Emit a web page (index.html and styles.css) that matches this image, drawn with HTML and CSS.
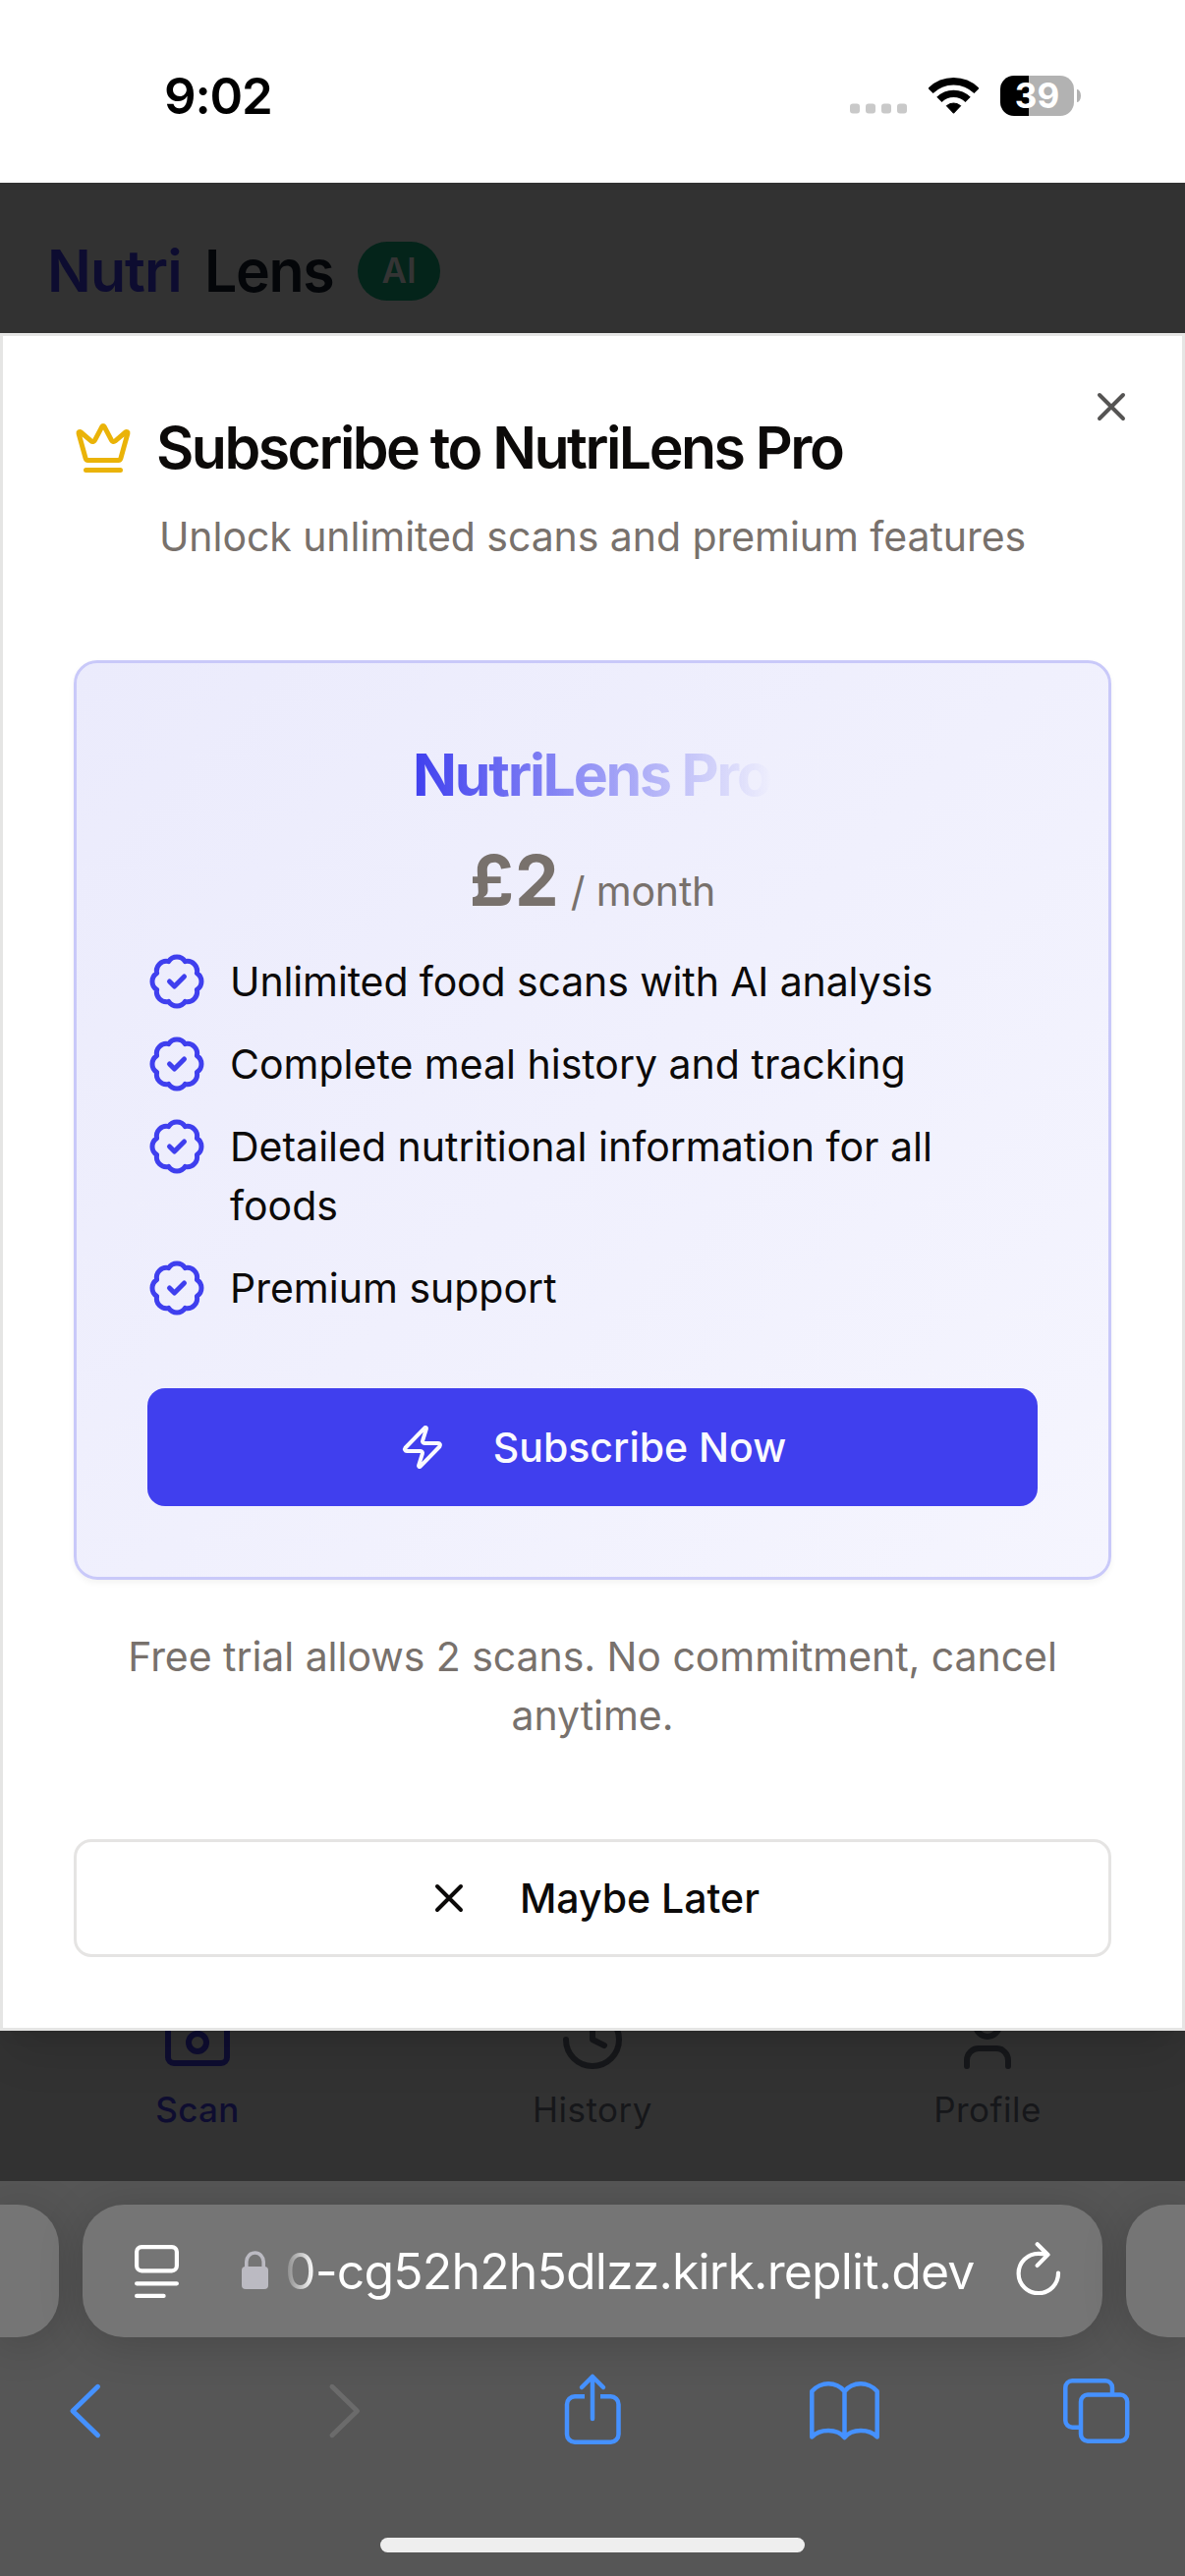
FILE: index.html
```html
<!DOCTYPE html>
<html lang="en">
<head>
<meta charset="utf-8">
<title>NutriLens</title>
<link rel="stylesheet" href="styles.css">
</head>
<body>
<svg class="sprite" aria-hidden="true">
  <symbol id="badge-check" viewBox="0 0 24 24"><path d="M3.85 8.62a4 4 0 0 1 4.78-4.77 4 4 0 0 1 6.74 0 4 4 0 0 1 4.78 4.78 4 4 0 0 1 0 6.74 4 4 0 0 1-4.77 4.78 4 4 0 0 1-6.75 0 4 4 0 0 1-4.78-4.77 4 4 0 0 1 0-6.76Z"/><path d="m9 12 2 2 4-4"/></symbol>
  <symbol id="close" viewBox="0 0 24 24"><path d="M18 6 6 18M6 6l12 12"/></symbol>
</svg>

<div class="screen">
  <div class="status">
    <span class="time">9:02</span>
    <div class="indicators">
      <svg width="58" height="41" viewBox="0 0 58 41" fill="#c9c9c9"><rect y="28.5" width="10" height="10" rx="3"/><rect x="16" y="28.5" width="10" height="10" rx="3"/><rect x="32" y="28.5" width="10" height="10" rx="3"/><rect x="48" y="28.5" width="10" height="10" rx="3"/></svg>
      <svg width="51" height="37" viewBox="0 0 51 37" fill="none" stroke="#000"><path stroke-width="7.4" d="M2 13.5a33.25 33.25 0 0 1 47 0M10.9 22.4a20.6 20.6 0 0 1 29.2 0"/><path fill="#000" stroke-width="1" stroke-linejoin="round" d="M25.5 36.3l-7.2-7.6a11 11 0 0 1 14.4 0z"/></svg>
      <div class="power"><span class="battery">39</span><i class="nub"></i></div>
    </div>
  </div>

  <div class="app">
    <header class="brand">
      <span class="nutri">Nutri</span><span class="lens">Lens</span><span class="ai">AI</span>
    </header>
    <nav class="tabs">
      <div class="tab active">
        <svg class="icon" viewBox="0 0 24 24"><path d="M14.5 4h-5L7 7H4a2 2 0 0 0-2 2v9a2 2 0 0 0 2 2h16a2 2 0 0 0 2-2V9a2 2 0 0 0-2-2h-3z"/><circle cx="12" cy="13" r="3"/></svg>
        <span>Scan</span>
      </div>
      <div class="tab">
        <svg class="icon" viewBox="0 0 24 24"><path d="M3 12a9 9 0 1 0 9-9 9.75 9.75 0 0 0-6.74 2.74L3 8M3 3v5h5M12 7v5l4 2"/></svg>
        <span>History</span>
      </div>
      <div class="tab">
        <svg class="icon" viewBox="0 0 24 24"><path d="M19 21v-2a4 4 0 0 0-4-4H9a4 4 0 0 0-4 4v2"/><circle cx="12" cy="7" r="4"/></svg>
        <span>Profile</span>
      </div>
    </nav>

    <section class="dialog">
      <svg class="icon dismiss"><use href="#close"/></svg>
      <h2 class="title">
        <svg class="icon crown" viewBox="0 0 24 24"><path d="M11.562 3.266a.5.5 0 0 1 .876 0L15.39 8.87a1 1 0 0 0 1.516.294L21.183 5.5a.5.5 0 0 1 .798.519l-2.834 10.246a1 1 0 0 1-.956.734H5.81a1 1 0 0 1-.957-.734L2.02 6.02a.5.5 0 0 1 .798-.519l4.276 3.664a1 1 0 0 0 1.516-.294zM5 21h14"/></svg>
        <span>Subscribe to NutriLens Pro</span>
      </h2>
      <p class="subtitle">Unlock unlimited scans and premium features</p>

      <div class="card">
        <h3 class="plan">NutriLens Pro</h3>
        <p class="price"><b>£2</b> / month</p>
        <ul class="features">
          <li><svg class="icon"><use href="#badge-check"/></svg><span class="tight">Unlimited food scans with AI analysis</span></li>
          <li><svg class="icon"><use href="#badge-check"/></svg><span>Complete meal history and tracking</span></li>
          <li><svg class="icon"><use href="#badge-check"/></svg><span>Detailed nutritional information for all foods</span></li>
          <li><svg class="icon"><use href="#badge-check"/></svg><span>Premium support</span></li>
        </ul>
        <div class="button primary">
          <svg class="icon" viewBox="0 0 24 24"><path d="M4 14a1 1 0 0 1-.78-1.63l9.9-10.2a.5.5 0 0 1 .86.46l-1.92 6.02A1 1 0 0 0 13 10h7a1 1 0 0 1 .78 1.63l-9.9 10.2a.5.5 0 0 1-.86-.46l1.92-6.02A1 1 0 0 0 11 14z"/></svg>
          <span>Subscribe Now</span>
        </div>
      </div>

      <p class="footnote">Free trial allows 2 scans. No commitment, cancel anytime.</p>
      <div class="button outline"><svg class="icon"><use href="#close"/></svg><span>Maybe Later</span></div>
    </section>
  </div>

  <footer class="browser">
    <div class="pills">
      <div class="pill first"></div>
      <div class="pill address">
        <svg class="reader" width="45" height="54" viewBox="0 0 45 54" fill="none" stroke="#fff" stroke-width="4.2" stroke-linecap="round"><rect x="2.1" y="2.1" width="40.8" height="24.2" rx="5"/><path d="M2.1 39.3h40.8M2.1 51.9h27.5"/></svg>
        <svg class="lock" width="27" height="39" viewBox="0 0 27 39"><rect y="16" width="27" height="23" rx="4" fill="#bbbac2"/><path d="M4.8 18v-7a8.7 9 0 0 1 17.4 0v7" fill="none" stroke="#bbbac2" stroke-width="3.6"/></svg>
        <span class="url">0-cg52h2h5dlzz.kirk.replit.dev</span>
        <svg class="reload" width="46" height="54" viewBox="0 0 46 54" fill="none" stroke="#fff" stroke-width="4.2" stroke-linecap="round" stroke-linejoin="round"><path d="M43 31.5A20.2 20.2 0 1 1 22.8 11.8c4 0 6 .3 9.5 1.2M21.7 2.3l10.8 10.6-10.8 11"/></svg>
      </div>
      <div class="pill last"></div>
    </div>
    <div class="tools">
      <svg class="tool" viewBox="0 0 80 80"><path d="M53.5 15.3 28 40l25.5 24.7" stroke-width="5"/></svg>
      <svg class="tool disabled" viewBox="0 0 80 80"><path d="M34 15.3 59.5 40 34 64.7" stroke-width="5"/></svg>
      <svg class="tool" viewBox="0 0 80 80"><path stroke-linecap="butt" d="M34 25.2H24a8 8 0 0 0-8 8v30.6a8 8 0 0 0 8 8h36.5a8 8 0 0 0 8-8V33.2a8 8 0 0 0-8-8H50"/><path d="M42 5v43M31 16 42 5l11 11"/></svg>
      <svg class="tool" viewBox="0 0 80 80"><path d="M40.500 20c-5-6-11-7.700-16.500-7.700S11.500 15 7.300 20v46.500C11.500 62 17.500 60 24 60s12.500 2 16.500 7zM40.500 20c5-6 11-7.700 16.500-7.700S69.500 15 73.700 20v46.500C69.500 62 63.500 60 57 60s-12.500 2-16.500 7"/></svg>
      <svg class="tool" viewBox="0 0 80 80"><rect x="24" y="23.500" width="47.200" height="47.200" rx="7"/><path stroke-linecap="butt" d="M56 22v-5.800a7 7 0 0 0-7-7H15.300a7 7 0 0 0-7 7v33.500a7 7 0 0 0 7 7H23"/></svg>
    </div>
    <div class="home"></div>
  </footer>
</div>
</body>
</html>
```
FILE: styles.css
```css
* { box-sizing: border-box; margin: 0; padding: 0; }
body { font-family: Inter, "Liberation Sans", sans-serif; font-size: 41px; line-height: 60px; color: #0c0a09; background: #fff; }
.sprite { display: none; }
svg { display: block; flex: none; }
.icon { fill: none; stroke: currentColor; stroke-width: 2; stroke-linecap: round; stroke-linejoin: round; }
.screen { width: 1206px; height: 2622px; display: flex; flex-direction: column; overflow: hidden; }

/* Status bar */
.status { height: 186px; padding: 9px 106px 0 167px; display: flex; align-items: flex-start; justify-content: space-between; color: #000; }
.time { font-size: 51px; font-weight: 600; letter-spacing: -1.2px; margin-top: 59px; }
.indicators { display: flex; align-items: center; gap: 22px; height: 41px; margin-top: 68px; }
.power { display: flex; align-items: center; gap: 3px; }
.battery { width: 75px; height: 41px; border-radius: 14px; background: linear-gradient(90deg, #000 29px, #b2b2b2 29px); color: #fff; font-size: 35px; font-weight: 700; line-height: 41px; text-align: center; }
.nub { width: 4px; height: 13px; border-radius: 0 4px 4px 0 / 0 7px 7px 0; background: #b2b2b2; }

/* Dimmed page behind the dialog */
.app { position: relative; height: 2034px; background: #323232; overflow: hidden; display: flex; flex-direction: column; justify-content: space-between; }
.brand { height: 153px; padding: 26px 48px 0; display: flex; align-items: center; font-size: 59px; font-weight: 600; }
.nutri { width: 160px; color: #0d0c30; letter-spacing: -.9px; }
.lens { width: 156px; color: #040609; letter-spacing: -1.4px; }
.ai { width: 84px; height: 60px; border-radius: 30px; background: #04241a; color: #343434; font-size: 35px; text-align: center; line-height: 58px; }
.tabs { height: 180px; display: grid; grid-template-columns: 402px 402px 402px; }
.tab { display: flex; flex-direction: column; align-items: center; font-size: 35px; letter-spacing: .5px; color: #16171a; }
.tab.active { color: #0e0d30; font-weight: 500; letter-spacing: .3px; }
.tab .icon { width: 72px; height: 72px; }
.tab span { line-height: 48px; margin-top: 11px; }

/* Dialog */
.dialog { position: absolute; left: 0; top: 153px; width: 1206px; height: 1728px; padding: 84px 72px 0; border: 3px solid #e5e5e4; background: #fff; box-shadow: 0 30px 45px -9px rgba(0, 0, 0, .1), 0 12px 18px -12px rgba(0, 0, 0, .1); }
.dismiss { position: absolute; right: 48px; top: 48px; width: 48px; height: 48px; color: #555453; }
.title { display: flex; align-items: center; gap: 24px; font-size: 59px; font-weight: 600; letter-spacing: -2.53px; white-space: nowrap; }
.crown { width: 60px; height: 60px; color: #eab308; }
.subtitle { margin-top: 30px; text-align: center; color: #78716c; letter-spacing: -.06px; }
.card { margin-top: 96px; height: 936px; padding: 84px 72px 72px; border: 3px solid #c9c9f9; border-radius: 24px; background: linear-gradient(135deg, #ebebfc, #f5f5fe) padding-box; box-shadow: 0 3px 6px rgba(0, 0, 0, .05); }
.plan { width: fit-content; margin: 0 auto; padding-right: 2px; font-size: 59px; font-weight: 700; letter-spacing: -2.25px; color: transparent; background: linear-gradient(90deg, #3f3fee, rgba(63, 63, 238, 0)); background-clip: text; -webkit-background-clip: text; }
.price { margin-top: 35px; height: 84px; line-height: 84px; text-align: center; color: #78716c; letter-spacing: -.2px; }
.price b { font-size: 71px; font-weight: 700; letter-spacing: .8px; }
.features { margin-top: 31px; list-style: none; display: flex; flex-direction: column; gap: 24px; }
.features li { display: flex; gap: 24px; }
.features .icon { width: 60px; height: 60px; color: #3f3fee; }
.tight { letter-spacing: -.12px; }
.button { height: 120px; border-radius: 18px; display: flex; align-items: center; justify-content: center; gap: 48px; font-weight: 500; }
.button .icon { width: 48px; height: 48px; }
.primary { margin-top: 72px; background: #403fee; color: #fafafe; }
.footnote { margin-top: 48px; padding: 0 30px; text-align: center; color: #78716c; letter-spacing: -.05px; }
.outline { margin-top: 96px; border: 3px solid #e5e4e3; }

/* Browser toolbar */
.browser { height: 402px; padding-top: 24px; background: #565656; overflow: hidden; }
.pills { display: grid; grid-template-columns: 60px 1038px 60px; gap: 24px; height: 135px; }
.pill { background: #757575; border-radius: 42px; box-shadow: 0 6px 45px rgba(0, 0, 0, .17); }
.first { border-radius: 0 42px 42px 0; }
.last { border-radius: 42px 0 0 42px; }
.address { display: flex; align-items: center; padding: 0 42px 0 53px; }
.lock { margin: 0 17px 2px 64px; }
.url { font-size: 50px; letter-spacing: -.87px; white-space: nowrap; color: transparent; background: linear-gradient(90deg, #858585, #fff 30px); background-clip: text; -webkit-background-clip: text; }
.reload { margin: 0 0 5px auto; }
.tools { margin-top: 35px; padding: 0 50px 0 46px; display: flex; justify-content: space-between; }
.tool { width: 80px; height: 80px; fill: none; stroke: #4591ff; stroke-width: 4.5; stroke-linecap: round; stroke-linejoin: round; }
.disabled { stroke: #6b6b6b; }
.home { width: 432px; height: 15px; margin: 89px auto 0; border-radius: 8px; background: #eee; }
```
